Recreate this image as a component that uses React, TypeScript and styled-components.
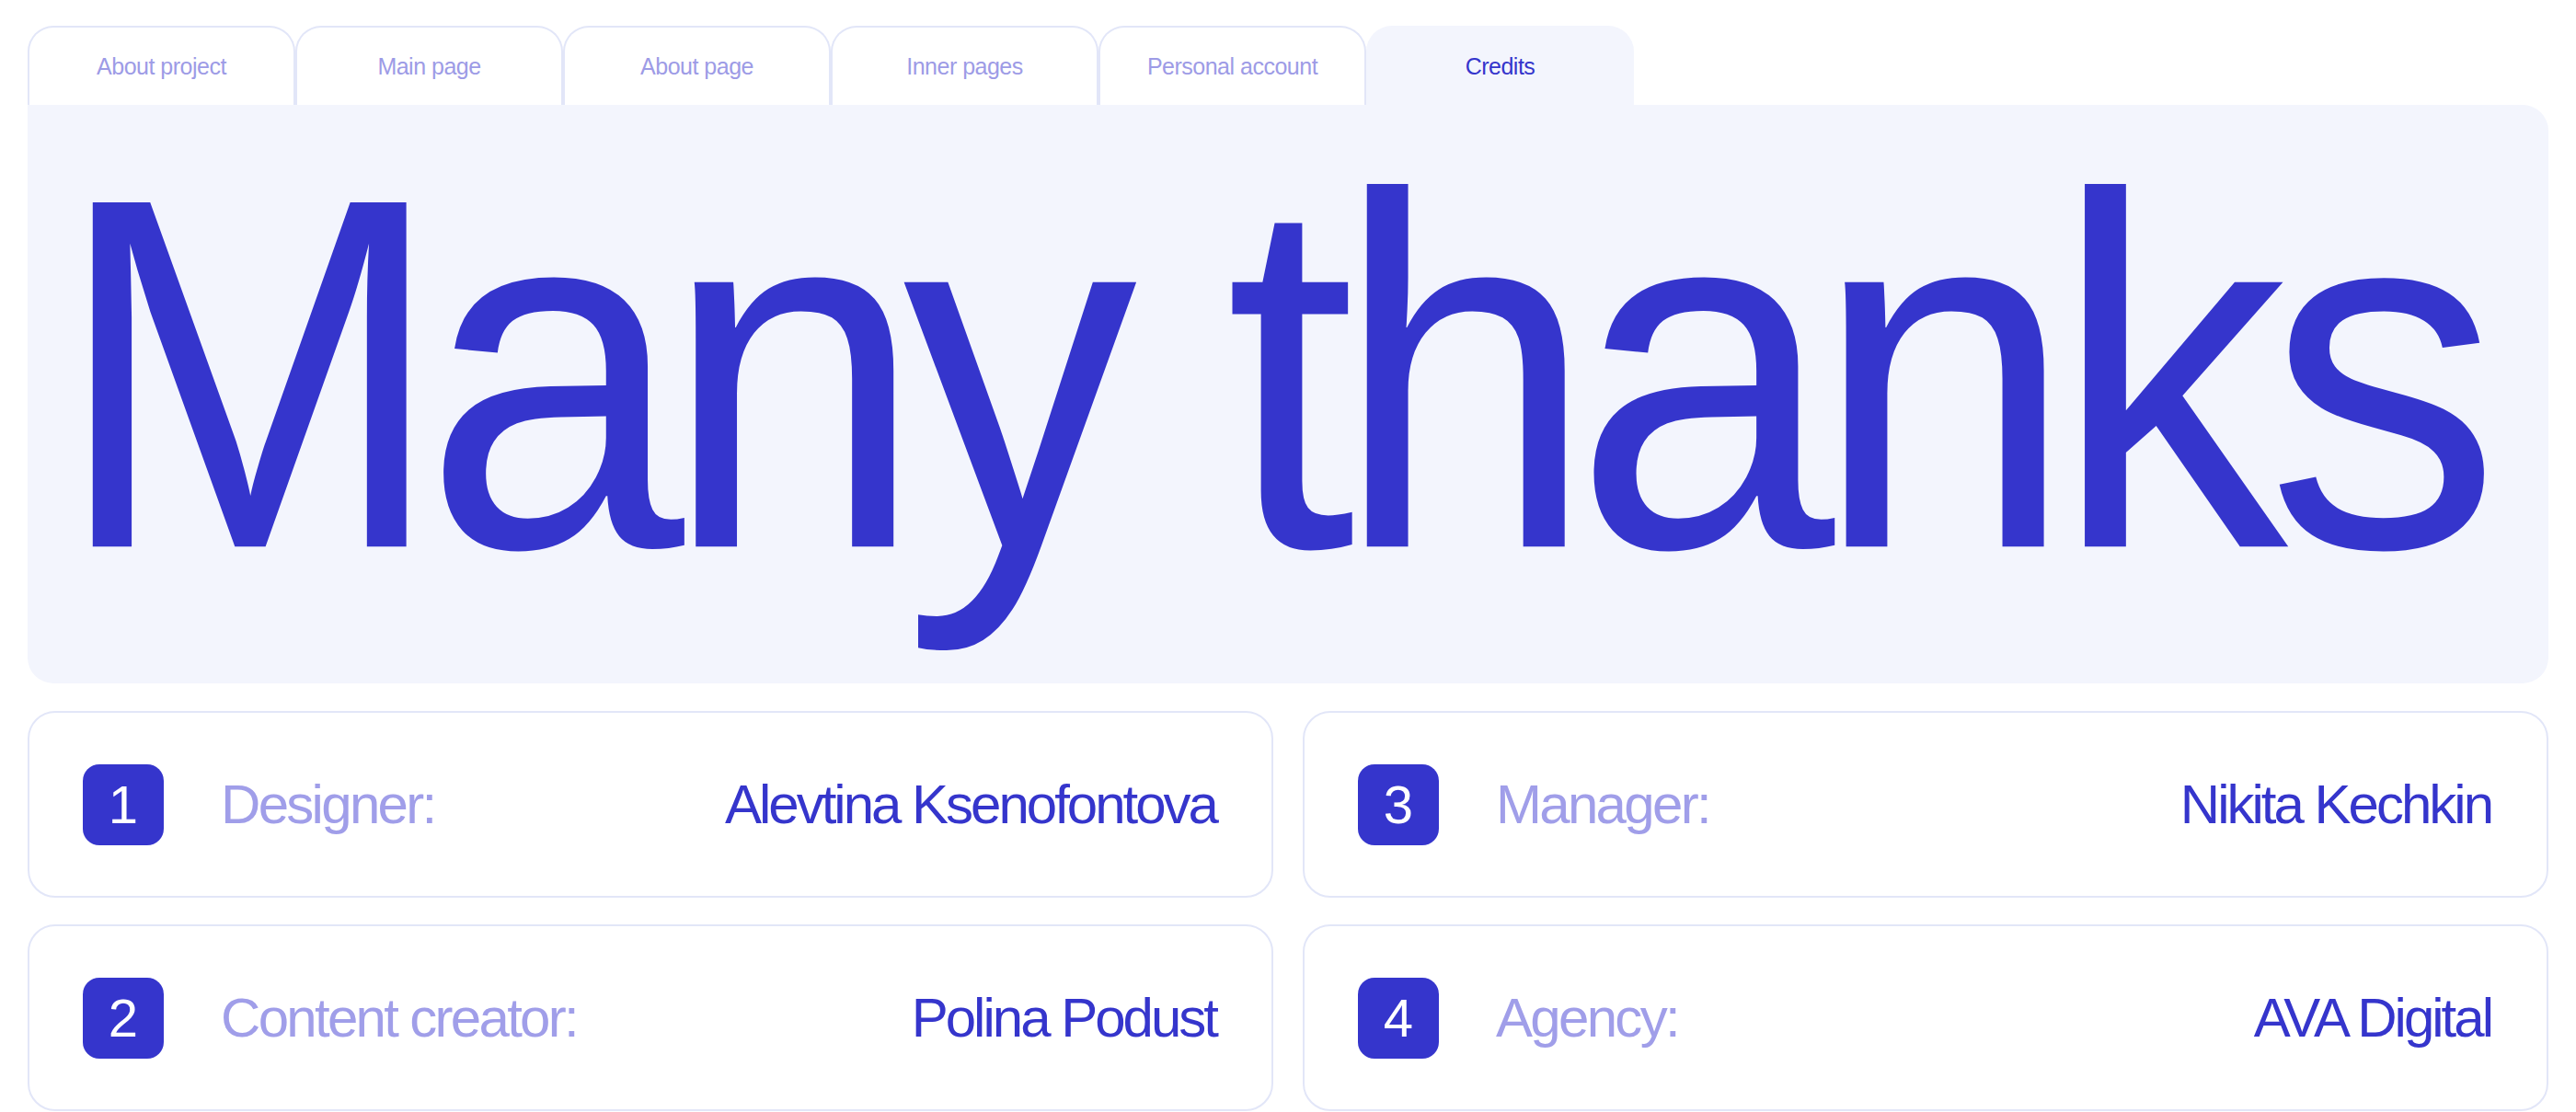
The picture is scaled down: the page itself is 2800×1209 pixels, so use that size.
import React from "react";
import styled, { createGlobalStyle } from "styled-components";

const GlobalStyle = createGlobalStyle`
  body {
    margin: 0;
    background: #ffffff;
    font-family: "Liberation Sans", Arial, sans-serif;
  }
`;

const Page = styled.div`
  padding: 28px 30px 0;
  display: flex;
  flex-direction: column;
`;

const Tabs = styled.nav`
  display: flex;
  align-items: flex-end;
`;

const Tab = styled.div<{ $active?: boolean }>`
  width: 291px;
  height: 86px;
  box-sizing: border-box;
  display: flex;
  align-items: center;
  justify-content: center;
  border: 2px solid ${(p) => (p.$active ? "#f3f5fd" : "#e2e6f8")};
  border-bottom: none;
  border-radius: 28px 28px 0 0;
  background: ${(p) => (p.$active ? "#f3f5fd" : "#ffffff")};
  color: ${(p) => (p.$active ? "#3535cc" : "#9d9be6")};
  font-size: 25px;
  letter-spacing: -0.02em;
`;

const Hero = styled.section`
  background: #f3f5fd;
  border-radius: 0 28px 28px 28px;
  height: 629px;
  box-sizing: border-box;
  padding: 20px 0 0 29px;
`;

/* the reference face is taller and narrower than Arial: stretch it vertically */
const Title = styled.h1`
  margin: 0;
  font-size: 500px;
  line-height: 1;
  font-weight: 400;
  color: #3535cc;
  letter-spacing: -0.045em;
  white-space: nowrap;
  display: inline-block;
  transform: scale(1.019, 1.088);
  transform-origin: left top;
`;

const Credits = styled.div`
  margin-top: 30px;
  display: grid;
  grid-template-columns: 1fr 1fr;
  grid-auto-flow: column;
  grid-template-rows: 203px 203px;
  column-gap: 32px;
  row-gap: 29px;
`;

const Card = styled.div`
  display: flex;
  align-items: center;
  box-sizing: border-box;
  border: 2px solid #e2e6f8;
  border-radius: 30px;
  padding: 0 60px 0 58px;
`;

const Badge = styled.div`
  width: 88px;
  height: 88px;
  flex: none;
  border-radius: 18px;
  background: #3535cc;
  color: #ffffff;
  display: flex;
  align-items: center;
  justify-content: center;
  font-size: 58px;
`;

const Role = styled.span`
  margin-left: 62px;
  font-size: 60px;
  letter-spacing: -0.045em;
  color: #a09ee9;
`;

const Name = styled.span`
  margin-left: auto;
  font-size: 60px;
  letter-spacing: -0.05em;
  color: #3535cc;
`;

const tabs = [
  "About project",
  "Main page",
  "About page",
  "Inner pages",
  "Personal account",
  "Credits",
];

const people = [
  { role: "Designer:", name: "Alevtina Ksenofontova" },
  { role: "Content creator:", name: "Polina Podust" },
  { role: "Manager:", name: "Nikita Kechkin" },
  { role: "Agency:", name: "AVA Digital" },
];

export default function App() {
  return (
    <>
      <GlobalStyle />
      <Page>
        <Tabs>
          {tabs.map((t) => (
            <Tab key={t} $active={t === "Credits"}>
              {t}
            </Tab>
          ))}
        </Tabs>
        <Hero>
          <Title>Many thanks</Title>
        </Hero>
        <Credits>
          {people.map((p, i) => (
            <Card key={p.role}>
              <Badge>{i + 1}</Badge>
              <Role>{p.role}</Role>
              <Name>{p.name}</Name>
            </Card>
          ))}
        </Credits>
      </Page>
    </>
  );
}
